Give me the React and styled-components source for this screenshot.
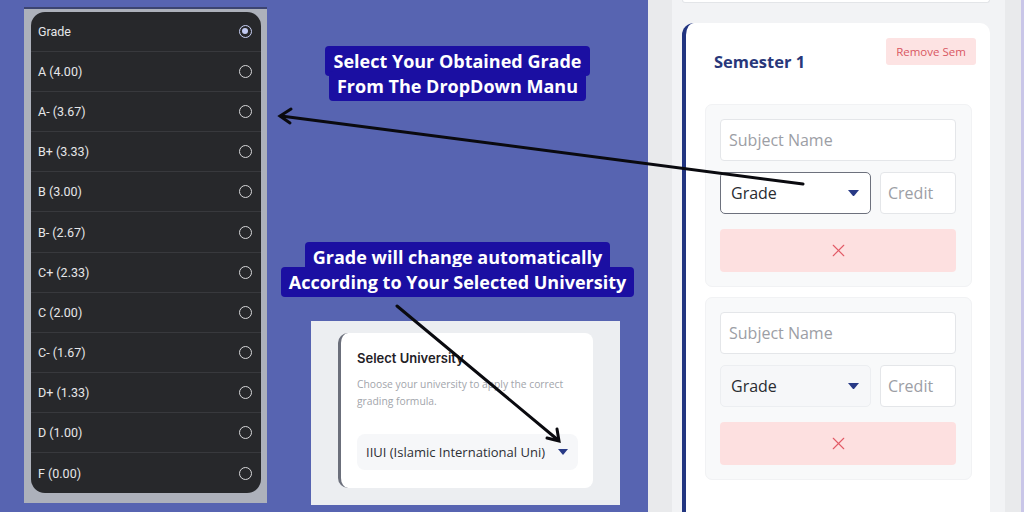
import styled, { createGlobalStyle } from 'styled-components';
import { X } from 'lucide-react';

const GlobalStyle = createGlobalStyle`
  html, body {
    margin: 0;
    padding: 0;
    background: #5764b1;
  }
  * {
    box-sizing: border-box;
  }
`;

const grades = [
  'A (4.00)',
  'A- (3.67)',
  'B+ (3.33)',
  'B (3.00)',
  'B- (2.67)',
  'C+ (2.33)',
  'C (2.00)',
  'C- (1.67)',
  'D+ (1.33)',
  'D (1.00)',
  'F (0.00)',
];

function Caret({ size = 11 }) {
  return (
    <svg width={size} height={size * 0.6} viewBox="0 0 10 6">
      <polygon points="0,0 10,0 5,6" fill="#283a86" />
    </svg>
  );
}

function SubjectRow({ focused }) {
  return (
    <SubjectBox>
      <TextInput>Subject Name</TextInput>
      <InputRow>
        <GradeSelect $focused={focused}>
          <span>Grade</span>
          <Caret />
        </GradeSelect>
        <CreditInput>Credit</CreditInput>
      </InputRow>
      <DeleteButton>
        <X size={21} strokeWidth={1.3} color="#e25a66" />
      </DeleteButton>
    </SubjectBox>
  );
}

export default function App() {
  return (
    <Page>
      <GlobalStyle />
      <LeftCol>
        <PhoneFrame>
          <Dropdown>
            <Option>
              <span>Grade</span>
              <Radio $checked />
            </Option>
            {grades.map((g) => (
              <Option key={g}>
                <span>{g}</span>
                <Radio />
              </Option>
            ))}
          </Dropdown>
        </PhoneFrame>
      </LeftCol>

      <MidCol>
        <Callout>
          <Line>Select Your Obtained Grade</Line>
          <Line>From The DropDown Manu</Line>
        </Callout>
        <Callout $top={141}>
          <Line>Grade will change automatically</Line>
          <Line>According to Your Selected University</Line>
        </Callout>
        <UniFrame>
          <UniCard>
            <UniTitle>Select University</UniTitle>
            <UniDesc>
              Choose your university to apply the correct grading formula.
            </UniDesc>
            <UniSelect>
              <span>IIUI (Islamic International Uni)</span>
              <Caret size={10} />
            </UniSelect>
          </UniCard>
        </UniFrame>
      </MidCol>

      <RightPanel>
        <RightInner>
          <TopStub />
          <SemesterCard>
            <SemHeader>
              <SemTitle>Semester 1</SemTitle>
              <RemoveButton>Remove Sem</RemoveButton>
            </SemHeader>
            <SubjectRow focused />
            <SubjectRow />
          </SemesterCard>
        </RightInner>
      </RightPanel>

      <Arrows width="1024" height="512" viewBox="0 0 1024 512">
        <g stroke="#0a0a0f" strokeWidth="3" fill="none" strokeLinecap="round">
          <line x1="803" y1="184" x2="281" y2="116" />
          <polyline points="291,109 280,116 290,123" />
          <line x1="397" y1="306" x2="558" y2="440" />
          <polyline points="547,438 559,441 557,429" />
        </g>
      </Arrows>
    </Page>
  );
}

const Page = styled.div`
  position: relative;
  display: flex;
  width: 1024px;
  height: 512px;
  overflow: hidden;
  background: #5764b1;
`;

const Arrows = styled.svg`
  position: absolute;
  top: 0;
  left: 0;
  pointer-events: none;
`;

/* left: android dropdown screenshot */
const LeftCol = styled.div`
  width: 267px;
  padding: 7px 0 0 24px;
`;

const PhoneFrame = styled.div`
  width: 243px;
  height: 496px;
  background: #adb1bb;
  border-top: 2px solid #3c4470;
  padding: 3px 6px 0 7px;
`;

const Dropdown = styled.div`
  width: 230px;
  height: 481px;
  background: #27282b;
  border-radius: 14px;
  overflow: hidden;
  font-family: Roboto, 'Liberation Sans', sans-serif;
`;

const Option = styled.div`
  display: flex;
  align-items: center;
  justify-content: space-between;
  height: 40.1px;
  padding: 0 9px 0 7px;
  font-size: 12.5px;
  color: #e6e6e8;
  border-bottom: 1px solid #38393d;
  &:last-child {
    border-bottom: none;
  }
`;

const Radio = styled.span`
  position: relative;
  width: 13px;
  height: 13px;
  border-radius: 50%;
  border: 1.6px solid ${({ $checked }) => ($checked ? '#c9d0f4' : '#d8d8da')};
  &::after {
    content: '';
    display: ${({ $checked }) => ($checked ? 'block' : 'none')};
    position: absolute;
    top: 2px;
    left: 2px;
    width: 6px;
    height: 6px;
    border-radius: 50%;
    background: #c3cbf2;
  }
`;

/* middle: callouts and university card */
const MidCol = styled.div`
  display: flex;
  flex-direction: column;
  align-items: center;
  width: 381px;
  padding-top: 46px;
`;

const Callout = styled.div`
  display: flex;
  flex-direction: column;
  align-items: center;
  margin-top: ${({ $top }) => ($top ? `${$top}px` : '0')};
  font-family: 'Open Sans', 'Liberation Sans', sans-serif;
  font-weight: 700;
  font-size: 18px;
  color: #ffffff;
`;

const Line = styled.span`
  display: inline-block;
  background: #1b0fa2;
  border-radius: 4px;
  padding: 3px 8px;
  line-height: 24px;
  white-space: nowrap;
  & + & {
    margin-top: -5px;
  }
`;

const UniFrame = styled.div`
  align-self: flex-start;
  margin: 24px 0 0 44px;
  width: 309px;
  height: 184px;
  background: #eceef1;
  padding: 12px 0 0 27px;
`;

const UniCard = styled.div`
  width: 255px;
  height: 155px;
  background: #ffffff;
  border-left: 3px solid #6b6f7b;
  border-radius: 10px 8px 8px 10px;
  padding: 17px 15px 0 16px;
  font-family: 'Open Sans', 'Liberation Sans', sans-serif;
`;

const UniTitle = styled.div`
  font-family: Inter, 'Liberation Sans', sans-serif;
  font-size: 13px;
  font-weight: 600;
  color: #1f2126;
`;

const UniDesc = styled.div`
  margin-top: 10px;
  font-size: 10.3px;
  line-height: 17px;
  color: #a2a5ab;
`;

const UniSelect = styled.div`
  display: flex;
  align-items: center;
  justify-content: space-between;
  margin-top: 24px;
  height: 36px;
  background: #f6f7f9;
  border-radius: 8px;
  padding: 0 10px 0 9px;
  font-size: 13px;
  color: #2d2f35;
`;

/* right: semester editor */
const RightPanel = styled.div`
  flex: 1;
  display: flex;
  background: #e9eaec;
  padding-left: 24px;
  border-right: 3px solid #c9c6e8;
`;

const RightInner = styled.div`
  width: 333px;
  background: #f2f3f5;
  padding: 0 15px 0 10px;
  font-family: 'Open Sans', 'Liberation Sans', sans-serif;
`;

const TopStub = styled.div`
  height: 3px;
  background: #ffffff;
  border: 1px solid #e3e5e8;
  border-top: none;
  border-radius: 0 0 8px 8px;
  margin-bottom: 20px;
`;

const SemesterCard = styled.div`
  background: #ffffff;
  border-left: 4px solid #223580;
  border-radius: 12px 10px 0 0;
  padding: 15px 18px 0 19px;
  height: 500px;
`;

const SemHeader = styled.div`
  display: flex;
  justify-content: space-between;
  align-items: flex-start;
  margin-right: -4px;
  margin-bottom: 32px;
`;

const SemTitle = styled.div`
  margin: 14px 0 0 9px;
  font-size: 16.5px;
  font-weight: 700;
  color: #28377a;
  line-height: 20px;
`;

const RemoveButton = styled.div`
  width: 90px;
  height: 27px;
  display: flex;
  align-items: center;
  justify-content: center;
  background: #fde3e3;
  border-radius: 3px;
  font-size: 11.5px;
  color: #d95762;
`;

const SubjectBox = styled.div`
  background: #f8f9fa;
  border: 1px solid #f1f2f4;
  border-radius: 7px;
  padding: 14px 15px 14px 14px;
  margin-bottom: 10px;
`;

const TextInput = styled.div`
  height: 42px;
  display: flex;
  align-items: center;
  padding-left: 8px;
  background: #ffffff;
  border: 1px solid #e4e6e9;
  border-radius: 4px;
  font-size: 16px;
  color: #9c9ea5;
`;

const InputRow = styled.div`
  display: flex;
  gap: 9px;
  margin: 11px 0 15px;
`;

const GradeSelect = styled.div`
  width: 151px;
  flex: none;
  height: 42px;
  display: flex;
  align-items: center;
  justify-content: space-between;
  padding: 0 11px 0 10px;
  background: ${({ $focused }) => ($focused ? '#ffffff' : '#f6f7f9')};
  border: 1px solid ${({ $focused }) => ($focused ? '#6d717d' : '#eceef1')};
  border-radius: 5px;
  font-size: 16px;
  color: #2a2c31;
`;

const CreditInput = styled(TextInput)`
  flex: 1;
  padding-left: 7px;
`;

const DeleteButton = styled.div`
  height: 43px;
  display: flex;
  align-items: center;
  justify-content: center;
  background: #fde0e0;
  border-radius: 4px;
`;
